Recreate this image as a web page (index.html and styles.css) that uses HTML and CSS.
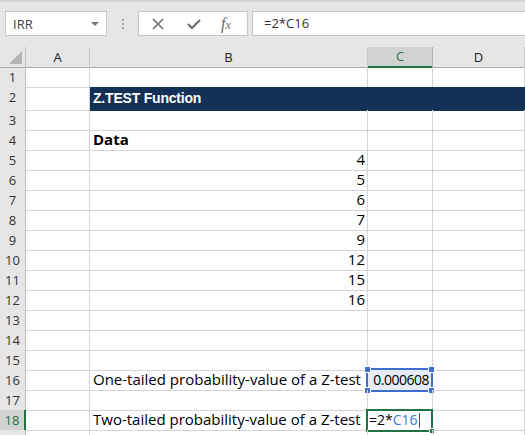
FILE: index.html
```html
<!DOCTYPE html>
<html>
<head>
<meta charset="utf-8">
<link rel="stylesheet" href="styles.css">
</head>
<body>
<div class="toolbar">
  <div class="namebox"><span class="nb-text">IRR</span><span class="nb-arrow"></span></div>
  <div class="sep"><i></i><i></i><i></i></div>
  <div class="btnbox">
    <svg class="ico" width="14" height="12" viewBox="0 0 14 12"><path d="M2 1 L12 11 M12 1 L2 11" stroke="#6e6e6e" stroke-width="1.6" fill="none"/></svg>
    <svg class="ico" width="14" height="12" viewBox="0 0 14 12"><path d="M1 6 L5 10 L13 2" stroke="#6e6e6e" stroke-width="2.2" fill="none"/></svg>
    <span class="fx">f<sub>x</sub></span>
  </div>
  <div class="formula">=2*C16</div>
</div>
<div class="sheet">
  <div class="row hdr">
    <div class="rh corner"><span class="tri"></span></div>
    <div class="ch">A</div>
    <div class="ch">B</div>
    <div class="ch sel">C</div>
    <div class="ch">D</div>
  </div>
  <div class="row"><div class="rh">1</div><div class="c"></div><div class="c"></div><div class="c"></div><div class="c"></div></div>
  <div class="row r2"><div class="rh">2</div><div class="c"></div><div class="c navy title">Z.TEST Function</div><div class="c navy"></div><div class="c navy"></div></div>
  <div class="row"><div class="rh">3</div><div class="c"></div><div class="c"></div><div class="c"></div><div class="c"></div></div>
  <div class="row"><div class="rh">4</div><div class="c"></div><div class="c bold">Data</div><div class="c"></div><div class="c"></div></div>
  <div class="row"><div class="rh">5</div><div class="c"></div><div class="c num">4</div><div class="c"></div><div class="c"></div></div>
  <div class="row"><div class="rh">6</div><div class="c"></div><div class="c num">5</div><div class="c"></div><div class="c"></div></div>
  <div class="row"><div class="rh">7</div><div class="c"></div><div class="c num">6</div><div class="c"></div><div class="c"></div></div>
  <div class="row"><div class="rh">8</div><div class="c"></div><div class="c num">7</div><div class="c"></div><div class="c"></div></div>
  <div class="row"><div class="rh">9</div><div class="c"></div><div class="c num">9</div><div class="c"></div><div class="c"></div></div>
  <div class="row"><div class="rh">10</div><div class="c"></div><div class="c num">12</div><div class="c"></div><div class="c"></div></div>
  <div class="row"><div class="rh">11</div><div class="c"></div><div class="c num">15</div><div class="c"></div><div class="c"></div></div>
  <div class="row"><div class="rh">12</div><div class="c"></div><div class="c num">16</div><div class="c"></div><div class="c"></div></div>
  <div class="row"><div class="rh">13</div><div class="c"></div><div class="c"></div><div class="c"></div><div class="c"></div></div>
  <div class="row"><div class="rh">14</div><div class="c"></div><div class="c"></div><div class="c"></div><div class="c"></div></div>
  <div class="row"><div class="rh">15</div><div class="c"></div><div class="c"></div><div class="c"></div><div class="c"></div></div>
  <div class="row"><div class="rh">16</div><div class="c"></div><div class="c">One-tailed probability-value of a Z-test</div><div class="c num refcell">0.000608<span class="refbox"><i class="h tl"></i><i class="h tr"></i><i class="h bl"></i><i class="h br"></i></span></div><div class="c"></div></div>
  <div class="row"><div class="rh">17</div><div class="c"></div><div class="c"></div><div class="c"></div><div class="c"></div></div>
  <div class="row"><div class="rh selr">18</div><div class="c"></div><div class="c">Two-tailed probability-value of a Z-test</div><div class="c editcell">=2*<span class="ref">C16</span><span class="caret"></span><span class="editbox"><i class="fill"></i></span></div><div class="c"></div></div>
  <div class="row"><div class="rh"></div><div class="c"></div><div class="c"></div><div class="c"></div><div class="c"></div></div>
</div>
</body>
</html>
```
FILE: styles.css
```css
html, body {
  margin: 0;
  padding: 0;
  background: #ffffff;
  overflow: hidden;
}
body {
  width: 525px;
  height: 435px;
  font-family: "Open Sans", "Liberation Sans", Arial, sans-serif;
}
.toolbar {
  height: 47px;
  box-sizing: border-box;
  background: #e6e6e6;
  border-top: 2px solid #d6d6d6;
  display: flex;
  align-items: flex-start;
  padding-top: 9px;
}
.namebox {
  margin-left: 5px;
  width: 102px;
  height: 25px;
  box-sizing: border-box;
  background: #fff;
  border: 1px solid #c6c6c6;
  display: flex;
  align-items: center;
  justify-content: space-between;
  padding: 0 7px 0 7px;
}
.nb-text {
  font-size: 13px;
  color: #444;
}
.nb-arrow {
  width: 0;
  height: 0;
  border-left: 4px solid transparent;
  border-right: 4px solid transparent;
  border-top: 4px solid #777;
}
.sep {
  width: 31px;
  height: 25px;
  display: flex;
  flex-direction: column;
  align-items: center;
  justify-content: center;
  gap: 2px;
}
.sep i {
  display: block;
  width: 2px;
  height: 2px;
  background: #a6a6a6;
}
.btnbox {
  width: 110px;
  height: 25px;
  box-sizing: border-box;
  background: #fff;
  border: 1px solid #c6c6c6;
  display: flex;
  align-items: center;
  padding-left: 12px;
  gap: 22px;
}
.fx {
  font-family: "Liberation Serif", serif;
  font-style: italic;
  font-size: 16px;
  color: #666;
  line-height: 1;
  margin-left: -2px;
}
.fx sub {
  font-size: 12px;
  vertical-align: 0;
}
.formula {
  margin-left: 4px;
  flex: 1;
  height: 25px;
  box-sizing: border-box;
  background: #fff;
  border: 1px solid #c6c6c6;
  border-right: none;
  font-size: 13px;
  color: #333;
  line-height: 23px;
  padding-left: 11px;
}
.sheet {
  display: flex;
  flex-direction: column;
}
.row {
  display: grid;
  grid-template-columns: 26px 64px 278px 65px 1fr;
  height: 20px;
}
.row.r2 {
  height: 23px;
}
.rh {
  box-sizing: border-box;
  background: #e6e6e6;
  border-right: 1px solid #c0c0c0;
  border-bottom: 1px solid #c8c8c8;
  font-size: 13px;
  color: #333;
  text-align: center;
  line-height: 20px;
}
.rh.selr {
  background: #d2d2d2;
  border-right: 2px solid #217346;
  color: #217346;
}
.hdr .rh, .hdr .ch {
  border-bottom: 1px solid #ababab;
}
.corner {
  position: relative;
}
.tri {
  position: absolute;
  right: 3px;
  bottom: 3px;
  width: 0;
  height: 0;
  border-left: 13px solid transparent;
  border-bottom: 13px solid #b4b4b4;
}
.ch {
  box-sizing: border-box;
  background: #e6e6e6;
  border-right: 1px solid #c8c8c8;
  font-size: 13px;
  color: #222;
  text-align: center;
  line-height: 20px;
}
.ch.sel {
  background: #d2d2d2;
  border-bottom: 2px solid #217346 !important;
  border-right-color: #b0b0b0;
  color: #217346;
  line-height: 19px;
}
.c {
  box-sizing: border-box;
  border-right: 1px solid #d4d4d4;
  border-bottom: 1px solid #d4d4d4;
  font-size: 15px;
  color: #000;
  padding: 0 3px;
  line-height: 19px;
  white-space: nowrap;
  position: relative;
}
.navy {
  background: #133156;
  border-color: #133156;
}
.title {
  color: #fff;
  font-family: "Liberation Sans", Arial, sans-serif;
  font-weight: bold;
  font-size: 14px;
  letter-spacing: -0.2px;
  line-height: 23px;
}
.bold {
  font-weight: bold;
}
.num {
  text-align: right;
  padding-right: 2px;
}
.refcell {
  background: #e5ecf8;
  padding-right: 3px;
  font-size: 14px;
  letter-spacing: -0.5px;
}
.refbox {
  position: absolute;
  left: -2px;
  top: -2px;
  right: -1px;
  bottom: -2px;
  border: 2px solid #3f6fcb;
}
.h {
  position: absolute;
  width: 5px;
  height: 5px;
  background: #3f6fcb;
  border: 1px solid #fff;
}
.h.tl { left: -4px; top: -4px; }
.h.tr { right: -4px; top: -4px; }
.h.bl { left: -4px; bottom: -4px; }
.h.br { right: -4px; bottom: -4px; }
.editcell {
  padding-left: 1px;
  font-size: 14px;
}
.ref {
  color: #3f78d8;
}
.caret {
  display: inline-block;
  width: 1px;
  height: 15px;
  background: #555;
  vertical-align: -3px;
  margin-left: 1px;
}
.editbox {
  position: absolute;
  left: -2px;
  top: -1px;
  right: -1px;
  bottom: -2px;
  border: 2px solid #217346;
}
.fill {
  position: absolute;
  right: -4px;
  bottom: -4px;
  width: 4px;
  height: 4px;
  background: #217346;
  border: 1px solid #fff;
}
```
